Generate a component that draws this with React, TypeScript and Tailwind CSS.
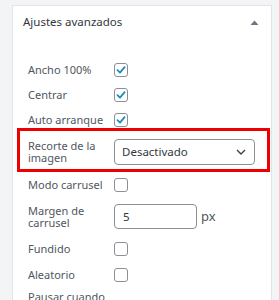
import React from "react";

const font = { fontFamily: '"Noto Sans", "Open Sans", sans-serif' };

function Check({ checked }: { checked?: boolean }) {
  return (
    <div className="w-[14px] h-[14px] rounded-[3px] border border-[#8c8f94] bg-white flex items-center justify-center shrink-0">
      {checked && (
        <svg width="12" height="12" viewBox="0 0 12 12">
          <polyline points="2.5,6.2 5,8.6 9.6,3.2" fill="none" stroke="#1e8cbe" strokeWidth="1.8" strokeLinecap="round" strokeLinejoin="round" />
        </svg>
      )}
    </div>
  );
}

function Label({ children }: { children: React.ReactNode }) {
  return <div className="w-[86px] shrink-0 text-[11px] leading-[12px] text-[#50575e]">{children}</div>;
}

function CheckRow({ label, checked, className }: { label: string; checked?: boolean; className?: string }) {
  return (
    <div className={`flex items-center h-[16px] ${className ?? ""}`}>
      <Label>{label}</Label>
      <Check checked={checked} />
    </div>
  );
}

export default function App() {
  return (
    <div className="w-[279px] h-[300px] overflow-hidden bg-[#f3f4f5] pl-[12px] pt-[5px]" style={font}>
      <div className="w-[260px] h-[330px] bg-white border border-[#e2e4e7]">
        <div className="h-[32px] flex items-start justify-between pl-[10px] pr-[12px] pt-[8px]">
          <span className="text-[11.5px] leading-[16px] text-[#32373c]">Ajustes avanzados</span>
          <svg width="9" height="6" viewBox="0 0 9 6" className="mt-[6px]">
            <polygon points="0.5,5 4.5,0.5 8.5,5" fill="#6c7781" />
          </svg>
        </div>
        <div className="pl-[15px] pt-[24px] flex flex-col">
          <CheckRow label="Ancho 100%" checked />
          <CheckRow label="Centrar" checked className="mt-[9px]" />
          <CheckRow label="Auto arranque" checked className="mt-[9px]" />
          <div className="ml-[-11px] mr-[1px] border-[3px] border-[#ee0000] pl-[8px] pr-[12px] pt-[8px] pb-[4px] flex items-center">
            <Label>
              Recorte de la
              <br />
              imagen
            </Label>
            <div className="flex-1 h-[26px] rounded-[4px] border border-[#8c8f94] flex items-center justify-between pl-[7px] pr-[8px]">
              <span className="text-[11.5px] text-[#32373c]">Desactivado</span>
              <svg width="10" height="6" viewBox="0 0 10 6">
                <polyline points="1,1 5,5 9,1" fill="none" stroke="#3c434a" strokeWidth="1.4" />
              </svg>
            </div>
          </div>
          <CheckRow label="Modo carrusel" className="mt-[5px]" />
          <div className="flex items-center mt-[11px]">
            <Label>
              Margen de
              <br />
              carrusel
            </Label>
            <div className="w-[83px] h-[25px] rounded-[4px] border border-[#8c8f94] flex items-center pl-[8px] text-[11.5px] text-[#32373c]">
              5
            </div>
            <span className="ml-[4px] text-[13px] text-[#50575e]">px</span>
          </div>
          <CheckRow label="Fundido" className="mt-[12px]" />
          <CheckRow label="Aleatorio" className="mt-[10px]" />
          <div className="flex items-center mt-[8px]">
            <Label>
              Pausar cuando
              <br />
              el ratón está
              <br />
              encima
            </Label>
            <Check />
          </div>
        </div>
      </div>
    </div>
  );
}
